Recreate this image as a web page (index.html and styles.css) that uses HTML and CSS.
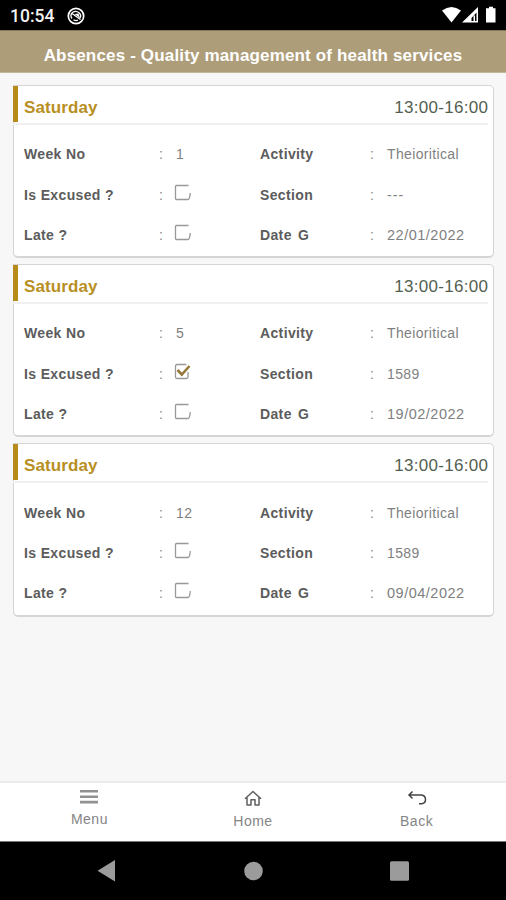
FILE: index.html
```
<!DOCTYPE html>
<html lang="en">
<head>
<meta charset="utf-8">
<title>Absences</title>
<link rel="stylesheet" href="styles.css">
</head>
<body>
<div class="status">
  <span class="clock">10:54</span>
  <svg class="sync" width="18" height="18" viewBox="0 0 18 18" fill="none" stroke="#fff"><circle cx="9" cy="9" r="7.700" stroke-width="1.700"/><path d="M5 11.500a4.500 4.500 0 0 1 .5-6Q9 3 12 5.800T12.800 11M11 13.200a4.500 4.500 0 0 1-4.500-.5" stroke-width="1.300"/><path d="M5 6.500l8.500 6" stroke-width="1.300"/><path d="M7.500 7l4-.5 1.500 4.500z" fill="#fff" stroke="none"/></svg>
  <svg class="signals" width="56" height="18" viewBox="0 0 56 18" fill="#fff"><path d="M0 4.500Q9.500-2.500 19 4.500L9.500 16.500z"/><path fill-rule="evenodd" d="M36 1v15.500H20zM34.500 6.500l-5 5.500v3h5z"/><path d="M31.500 9.500h1.500V15h-1.500z"/><path d="M47 .7h4v1.500h2.500V16.500h-9.500V2.200H47z"/></svg>
</div>
<header class="title"><h1>Absences - Quality management of health services</h1></header>
<main class="list">
  <section class="card">
    <div class="card-head"><h2>Saturday</h2><time>13:00-16:00</time></div>
    <div class="fields">
      <b>Week No</b><i>:</i><span>1</span><b>Activity</b><i>:</i><span>Theioritical</span>
      <b>Is Excused ?</b><i>:</i><span><svg class="check" viewBox="0 0 18 18"><path class="box" d="M14.500 1.500H2.500Q1.500 1.500 1.500 2.500V14.500Q1.500 15.500 2.500 15.500H14Q16 15 16.200 9"/></svg></span><b>Section</b><i>:</i><span class="none">---</span>
      <b>Late ?</b><i>:</i><span><svg class="check" viewBox="0 0 18 18"><path class="box" d="M14.500 1.500H2.500Q1.500 1.500 1.500 2.500V14.500Q1.500 15.500 2.500 15.500H14Q16 15 16.200 9"/></svg></span><b class="wide">Date G</b><i>:</i><span class="date">22/01/2022</span>
    </div>
  </section>
  <section class="card">
    <div class="card-head"><h2>Saturday</h2><time>13:00-16:00</time></div>
    <div class="fields">
      <b>Week No</b><i>:</i><span>5</span><b>Activity</b><i>:</i><span>Theioritical</span>
      <b>Is Excused ?</b><i>:</i><span><svg class="check" viewBox="0 0 18 18"><path class="box" d="M12.500 1.500H3Q1.500 1.500 1.500 3V14Q1.500 15.500 3 15.500H12.500Q14 15.500 14 14V9"/><path class="tick" d="M3.500 7l4.300 4.500L15.500 3"/></svg></span><b>Section</b><i>:</i><span>1589</span>
      <b>Late ?</b><i>:</i><span><svg class="check" viewBox="0 0 18 18"><path class="box" d="M14.500 1.500H2.500Q1.500 1.500 1.500 2.500V14.500Q1.500 15.500 2.500 15.500H14Q16 15 16.200 9"/></svg></span><b class="wide">Date G</b><i>:</i><span class="date">19/02/2022</span>
    </div>
  </section>
  <section class="card">
    <div class="card-head"><h2>Saturday</h2><time>13:00-16:00</time></div>
    <div class="fields">
      <b>Week No</b><i>:</i><span>12</span><b>Activity</b><i>:</i><span>Theioritical</span>
      <b>Is Excused ?</b><i>:</i><span><svg class="check" viewBox="0 0 18 18"><path class="box" d="M14.500 1.500H2.500Q1.500 1.500 1.500 2.500V14.500Q1.500 15.500 2.500 15.500H14Q16 15 16.200 9"/></svg></span><b>Section</b><i>:</i><span>1589</span>
      <b>Late ?</b><i>:</i><span><svg class="check" viewBox="0 0 18 18"><path class="box" d="M14.500 1.500H2.500Q1.500 1.500 1.500 2.500V14.500Q1.500 15.500 2.500 15.500H14Q16 15 16.200 9"/></svg></span><b class="wide">Date G</b><i>:</i><span class="date">09/04/2022</span>
    </div>
  </section>
</main>
<nav class="tabs">
  <a class="tab"><svg width="18" height="14" viewBox="0 0 18 14" fill="#929292"><path d="M0 0h18v2.600H0zM0 5.400h18V8H0zM0 10.800h18v2.600H0z"/></svg><span>Menu</span></a>
  <a class="tab"><svg width="20" height="16" viewBox="0 0 20 16" fill="none" stroke="#606060" stroke-width="1.500" stroke-linejoin="round"><path d="M2 8.800L10 1.500l8 7.300M4 7.500v7.500h4V9.800h4V15h4V7.500"/></svg><span>Home</span></a>
  <a class="tab"><svg width="20" height="16" viewBox="0 0 20 16" fill="none" stroke="#444" stroke-width="1.500"><path d="M5.500 1.500L2 5l3.500 3.500M2 5h12.500Q18.500 5.500 18.500 9.500T14.500 13.800H12"/></svg><span>Back</span></a>
</nav>
<div class="sysnav">
  <svg width="20" height="22" viewBox="0 0 20 22"><path d="M18 0v21.500L.5 10.700z"/></svg>
  <svg width="20" height="20" viewBox="0 0 20 20"><circle cx="10.500" cy="10" r="9.300"/></svg>
  <svg width="20" height="20" viewBox="0 0 20 20"><rect x="0" y=".3" width="19" height="19.400" rx="1.500"/></svg>
</div>
</body>
</html>
```

FILE: styles.css
```
* { box-sizing: border-box; }
body {
  margin: 0;
  height: 900px;
  display: flex;
  flex-direction: column;
  overflow: hidden;
  background: #f7f7f7;
  font-family: "Liberation Sans", Arial, sans-serif;
}
h1, h2 { margin: 0; }
.status {
  height: 30px;
  background: #000;
  display: flex;
  align-items: center;
  padding: 0 8px 0 10px;
}
.clock {
  color: #f2f2f2;
  font: 500 17.5px/30px Roboto, sans-serif;
  width: 57px;
  padding-top: 2px;
}
.sync { margin-top: 1px; }
.signals { margin-left: auto; }
.title {
  height: 43px;
  background: #ae9d79;
  border-bottom: 1px solid #c3b79c;
  border-top: 1px solid #83765b;
  text-align: center;
  padding-top: 6px;
}
.title h1 {
  color: #fff;
  font-size: 17px;
  letter-spacing: .16px;
  line-height: 37px;
  white-space: nowrap;
}
.list {
  flex: 1;
  padding: 12px 12px 0 13px;
  display: flex;
  flex-direction: column;
  gap: 6px;
}
.card {
  height: 173.200px;
  background: #fff;
  border: 1px solid #d5d5d5;
  border-bottom-width: 2px;
  border-radius: 0 5px 5px 5px;
}
.card-head {
  height: 39px;
  display: flex;
  justify-content: space-between;
  align-items: center;
  margin: 0 5px 0 -1px;
  padding-left: 11px;
  padding-top: 6px;
  border-bottom: 2px solid #f0f0f0;
  background: linear-gradient(#b88c1b, #b88c1b) 0 0 / 5px 36px no-repeat;
}
.card-head h2 { color: #b88f24; font-size: 17px; letter-spacing: .1px; }
.card-head time { color: #536050; font-size: 17px; letter-spacing: .3px; margin-right: -.3px; }
.fields {
  display: grid;
  grid-template-columns: 135px 17px 84px 110px 17px 1fr;
  grid-template-rows: repeat(3, 40.4px);
  align-items: center;
  padding: 9px 0 0 10px;
  font-size: 14px;
}
.fields b { color: #5c5c5c; letter-spacing: .36px; }
.fields .wide { word-spacing: 2px; }
.fields i { color: #888; font-style: normal; }
.fields span { color: #7f7f7f; letter-spacing: .35px; }
.fields .none { letter-spacing: 1.1px; }
.fields .date { font-size: 14.5px; letter-spacing: .5px; }
.check {
  display: block;
  width: 18px;
  height: 18px;
  margin: -4px 0 0 -2px;
  fill: none;
}
.box { stroke: #999; stroke-width: 1.300; }
.tick { stroke: #95783a; stroke-width: 2.600; }
.tabs {
  height: 60px;
  border-top: 2px solid #ececec;
  background: #fff;
  display: grid;
  grid-template-columns: repeat(3, 163.6px);
  justify-content: center;
}
.tab {
  display: flex;
  flex-direction: column;
  align-items: center;
  gap: 7px;
  padding-top: 7px;
  color: #858585;
  font-size: 14px;
  line-height: 17px;
  letter-spacing: .5px;
}
.sysnav {
  height: 59px;
  background: #000;
  border-top: 1px solid #777;
  display: grid;
  grid-template-columns: repeat(3, 146.5px);
  justify-content: center;
  align-items: center;
  justify-items: center;
  fill: #9b9b9b;
}
```
